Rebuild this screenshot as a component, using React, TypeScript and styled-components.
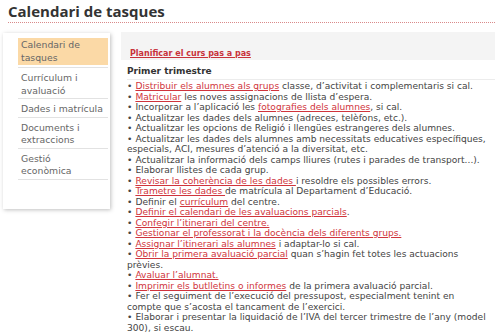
import styled, { createGlobalStyle } from "styled-components";

const GlobalStyle = createGlobalStyle`
    body {
        margin: 0;
        background: #ffffff;
        font-family: "DejaVu Sans", Verdana, sans-serif;
        color: #444;
    }
`;

type Item = { before?: string; link?: string; after?: string };

// menu labels, one entry per printed line
const menu: string[][] = [
    ["Calendari de", "tasques"],
    ["Currículum i", "avaluació"],
    ["Dades i matrícula"],
    ["Documents i", "extraccions"],
    ["Gestió", "econòmica"],
];

const tasks: Item[] = [
    { link: "Distribuir els alumnes als grups", after: " classe, d’activitat i complementaris si cal." },
    { link: "Matricular", after: " les noves assignacions de llista d’espera." },
    { before: "Incorporar a l’aplicació les ", link: "fotografies dels alumnes", after: ", si cal." },
    { before: "Actualitzar les dades dels alumnes (adreces, telèfons, etc.)." },
    { before: "Actualitzar les opcions de Religió i llengües estrangeres dels alumnes." },
    { before: "Actualitzar les dades dels alumnes amb necessitats educatives específiques, especials, ACI, mesures d’atenció a la diversitat, etc." },
    { before: "Actualitzar la informació dels camps lliures (rutes i parades de transport...)." },
    { before: "Elaborar llistes de cada grup." },
    { link: "Revisar la coherència de les dades ", after: "i resoldre els possibles errors." },
    { link: "Trametre les dades ", after: "de matrícula al Departament d’Educació." },
    { before: "Definir el ", link: "currículum", after: " del centre." },
    { link: "Definir el calendari de les avaluacions parcials", after: "." },
    { link: "Confegir l’itinerari del centre." },
    { link: "Gestionar el professorat i la docència dels diferents grups." },
    { link: "Assignar l’itinerari als alumnes", after: " i adaptar-lo si cal." },
    { link: "Obrir la primera avaluació parcial", after: " quan s’hagin fet totes les actuacions prèvies." },
    { link: "Avaluar l’alumnat." },
    { link: "Imprimir els butlletins o informes", after: " de la primera avaluació parcial." },
    { before: "Fer el seguiment de l’execució del pressupost, especialment tenint en compte que s’acosta el tancament de l’exercici." },
    { before: "Elaborar i presentar la liquidació de l’IVA del tercer trimestre de l’any (model 300), si escau." },
];

const App = () => {
    return (
        <Page>
            <GlobalStyle />
            <Title>Calendari de tasques</Title>
            <Body>
                <Sidebar>
                    {menu.map((lines, i) => (
                        <MenuItem key={i} $active={i === 0}>
                            {lines.map((l) => (
                                <MenuLine key={l}>{l}</MenuLine>
                            ))}
                        </MenuItem>
                    ))}
                </Sidebar>
                <Main>
                    <PlanBar>
                        <PlanLink href="#">Planificar el curs pas a pas</PlanLink>
                    </PlanBar>
                    <Section>Primer trimestre</Section>
                    <TaskList>
                        {tasks.map((t, i) => (
                            <Task key={i}>
                                {t.before}
                                {t.link && <TaskLink href="#">{t.link}</TaskLink>}
                                {t.after}
                            </Task>
                        ))}
                    </TaskList>
                </Main>
            </Body>
        </Page>
    );
};

export default App;

const Page = styled.div`
    width: 500px;
    height: 336px;
    overflow: hidden;
`;

const Title = styled.h1`
    margin: 0 5px 0 8px;
    padding: 2px 0 2px;
    font-family: "Open Sans", "DejaVu Sans", sans-serif;
    font-size: 15px;
    line-height: 18px;
    font-weight: 700;
    color: #333;
    border-bottom: 1px dotted #d98a8a;
`;

const Body = styled.div`
    display: flex;
    align-items: flex-start;
    margin-top: 9px;
`;

const Sidebar = styled.div`
    width: 90px;
    margin-left: 3px;
    margin-top: 1px;
    padding: 5px 2px 29px 15px;
    background: #fff;
    box-shadow: 1px 1px 4px rgba(0, 0, 0, 0.25);
`;

const MenuItem = styled.div<{ $active?: boolean }>`
    padding: ${(p) => (p.$active ? "1px 3px 1px" : "4px 3px 1px")};
    font-size: 9.3px;
    line-height: 12.5px;
    color: #666;
    background: ${(p) => (p.$active ? "#fbd9a6" : "transparent")};
    border-bottom: ${(p) => (p.$active ? "none" : "1px solid #e2e2e2")};
    box-shadow: ${(p) => (p.$active ? "0 2px 0 #fff, 0 3px 0 #e2e2e2" : "none")};
    margin-bottom: ${(p) => (p.$active ? "3px" : "0")};
`;

const MenuLine = styled.div`
    white-space: nowrap;
`;

const Main = styled.div`
    flex: 1;
    margin-left: 11px;
    margin-right: 10px;
`;

const PlanBar = styled.div`
    background: #f4f4f4;
    padding: 9px 9px 7px;
    height: 12px;
    margin-right: -5px;
`;

const PlanLink = styled.a`
    font-size: 8px;
    font-weight: 700;
    color: #c8323a;
    text-decoration: underline;
`;

const Section = styled.div`
    margin: 5px -5px 0 6px;
    padding-bottom: 2px;
    font-size: 9px;
    font-weight: 700;
    line-height: 12px;
    color: #333;
    border-bottom: 1px solid #ececec;
`;

const TaskList = styled.ul`
    list-style: none;
    margin: 1px 0 0 6px;
    padding: 0;
`;

const Task = styled.li`
    font-size: 9.1px;
    line-height: 10.5px;
    color: #444;

    &::before {
        content: "•";
        margin-right: 3px;
    }
`;

const TaskLink = styled.a`
    color: #d0343c;
    text-decoration: underline;
`;
